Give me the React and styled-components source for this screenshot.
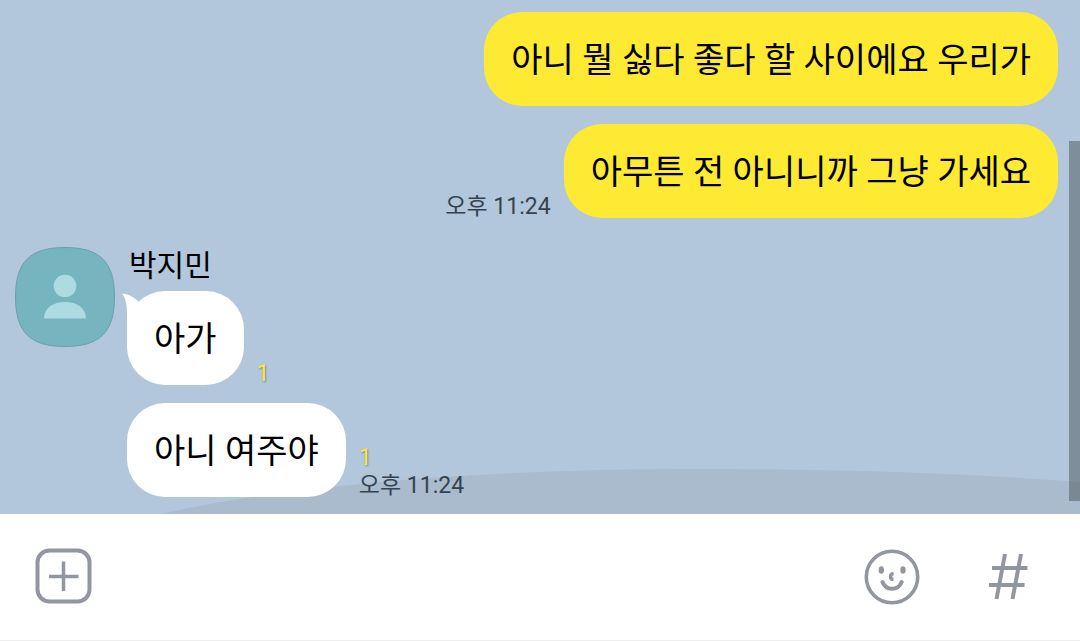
import React from "react";
import styled, { createGlobalStyle } from "styled-components";

const GlobalStyle = createGlobalStyle`
  * {
    box-sizing: border-box;
  }
  body {
    margin: 0;
    font-family: Roboto, "Noto Sans CJK KR", sans-serif;
    color: #000;
  }
`;

const StyledPage = styled.div`
  display: flex;
  flex-direction: column;
  min-height: 100vh;
`;

const StyledChat = styled.main`
  flex: 1;
  display: flex;
  flex-direction: column;
  gap: 29px;
  position: relative;
  padding: 12px 22px 17px 15px;
  background-color: #b2c7db;
`;

const StyledHill = styled.svg`
  position: absolute;
  left: 0;
  bottom: 0;
  width: 100%;
  height: 46px;
`;

const StyledScrollThumb = styled.div`
  position: absolute;
  right: 0;
  bottom: 13px;
  width: 11px;
  height: 70%;
  background-color: rgba(84, 94, 100, 0.55);
`;

const StyledMessages = styled.div`
  display: flex;
  flex-direction: column;
  align-items: ${({ $mine }) => ($mine ? "flex-end" : "flex-start")};
  gap: 18px;
  position: relative;
`;

const StyledReceived = styled.section`
  display: flex;
  align-items: flex-start;
  gap: 12px;
`;

const StyledAvatar = styled.svg`
  flex: none;
  width: 100px;
  height: 100px;
`;

const StyledName = styled.h2`
  height: 44px;
  margin: 0 0 0 2px;
  font-size: 30px;
  font-weight: 400;
  line-height: 38px;
`;

const StyledRow = styled.div`
  display: flex;
  flex-direction: ${({ $mine }) => ($mine ? "row-reverse" : "row")};
  align-items: flex-end;
  gap: 13px;
`;

const StyledBubble = styled.p`
  position: relative;
  margin: 0;
  padding: 23px 27px 21px;
  border-radius: 38px;
  background-color: ${({ $mine }) => ($mine ? "#ffea33" : "#fff")};
  font-size: 34px;
  line-height: 50px;
`;

const StyledTail = styled.svg`
  position: absolute;
  top: 1px;
  left: -6px;
  width: 26px;
  height: 40px;
`;

const StyledMeta = styled.div`
  display: flex;
  flex-direction: column;
  gap: 6px;
  font-size: 23px;
  line-height: 22px;
`;

const StyledUnread = styled.span`
  color: #f7e64a;
  text-shadow: 1px 1px 2px rgba(80, 90, 60, 0.6);
`;

const StyledTime = styled.time`
  color: #36434f;
`;

const StyledComposer = styled.form`
  display: flex;
  align-items: center;
  height: 127px;
  padding: 0 36px 2px 27px;
  border-bottom: 1px solid #eee;
  background-color: #fff;
`;

const StyledInput = styled.input`
  flex: 1;
  min-width: 0;
  height: 72px;
  padding: 0 16px;
  border: none;
  outline: none;
  background: none;
  font: inherit;
  font-size: 34px;
`;

const StyledActions = styled.div`
  display: flex;
  gap: 44px;
`;

const StyledIconButton = styled.button`
  display: flex;
  align-items: center;
  justify-content: center;
  width: 72px;
  height: 72px;
  padding: 0;
  border: none;
  background: none;
  color: #92969e;
  cursor: pointer;

  svg {
    width: 60px;
    height: 60px;
    fill: none;
    stroke: currentColor;
    stroke-width: 4;
  }
`;

const Meta = ({ unread, time }) => (
  <StyledMeta>
    {unread && <StyledUnread>{unread}</StyledUnread>}
    {time && <StyledTime dateTime="23:24">{time}</StyledTime>}
  </StyledMeta>
);

const Message = ({ text, mine, tail, unread, time }) => (
  <StyledRow $mine={mine}>
    <StyledBubble $mine={mine}>
      {tail && (
        <StyledTail viewBox="0 0 26 40" aria-hidden="true">
          <path d="M1 1.500C7 2 12 4.500 17 9L24 20L6 38V20C6 12 4 5 1 1.500Z" fill="#fff" />
        </StyledTail>
      )}
      {text}
    </StyledBubble>
    <Meta unread={unread} time={time} />
  </StyledRow>
);

const Avatar = () => (
  <StyledAvatar viewBox="0 0 100 100" role="img" aria-label="박지민">
    <path
      d="M50 .5C85 .5 99.5 15 99.5 50S85 99.5 50 99.5S.5 85 .5 50S15 .5 50 .5Z"
      fill="#76b4bf"
      stroke="#6b9fae"
    />
    <circle cx="50" cy="39" r="11.3" fill="#acdbe1" />
    <path d="M29 71.5C29 61 38 55 50 55S71 61 71 71.5Z" fill="#acdbe1" />
  </StyledAvatar>
);

const Composer = () => (
  <StyledComposer onSubmit={(e) => e.preventDefault()}>
    <StyledIconButton type="button" aria-label="첨부">
      <svg viewBox="0 0 60 60">
        <rect x="4.500" y="4.500" width="52" height="51" rx="12" />
        <path d="M30.500 15.500V45M16 30.500H45.500" strokeWidth="3.500" />
      </svg>
    </StyledIconButton>
    <StyledInput type="text" aria-label="메시지" />
    <StyledActions>
      <StyledIconButton type="button" aria-label="이모티콘">
        <svg viewBox="0 0 60 60">
          <circle cx="30" cy="31" r="25.7" strokeWidth="3.600" />
          <ellipse cx="19.300" cy="24" rx="2.700" ry="3.800" fill="currentColor" stroke="none" />
          <ellipse cx="41" cy="24" rx="2.700" ry="3.800" fill="currentColor" stroke="none" />
          <path d="M31.500 27.500C27.500 28 27.500 33.500 31.500 33.500" strokeWidth="3.400" />
          <path d="M20.500 36C24 45 36 45 39.700 36" strokeLinecap="round" />
        </svg>
      </StyledIconButton>
      <StyledIconButton type="button" aria-label="샵검색">
        <svg viewBox="0 0 60 60">
          <path d="M27 8L18.500 53M43 8L34.500 53M14 22H49.500M11 39H46.500" />
        </svg>
      </StyledIconButton>
    </StyledActions>
  </StyledComposer>
);

const App = () => {
  return (
    <StyledPage>
      <GlobalStyle />
      <StyledChat>
        <StyledHill viewBox="0 0 1080 46" preserveAspectRatio="none" aria-hidden="true">
          <path d="M160 46C300 15 500 1 690 1C840 1 960 5 1080 14V46Z" fill="#a9bbcd" />
        </StyledHill>
        <StyledMessages $mine>
          <Message mine text="아니 뭘 싫다 좋다 할 사이에요 우리가" />
          <Message mine text="아무튼 전 아니니까 그냥 가세요" time="오후 11:24" />
        </StyledMessages>
        <StyledReceived>
          <Avatar />
          <div>
            <StyledName>박지민</StyledName>
            <StyledMessages>
              <Message tail text="아가" unread="1" />
              <Message text="아니 여주야" unread="1" time="오후 11:24" />
            </StyledMessages>
          </div>
        </StyledReceived>
        <StyledScrollThumb />
      </StyledChat>
      <Composer />
    </StyledPage>
  );
};

export default App;
